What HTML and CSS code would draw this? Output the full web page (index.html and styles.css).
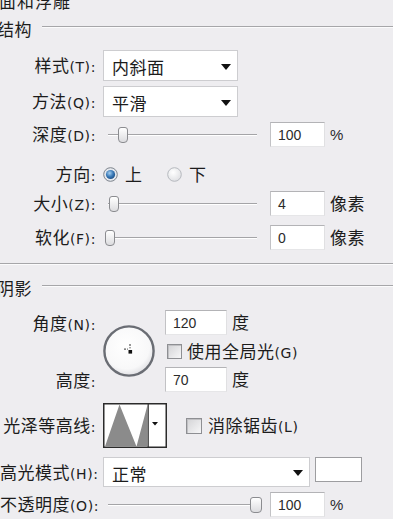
FILE: index.html
```html
<!DOCTYPE html>
<html lang="zh">
<head>
<meta charset="utf-8">
<title>斜面和浮雕</title>
<link rel="stylesheet" href="styles.css">
</head>
<body>
<div class="panel">
  <div class="title">面和浮雕</div>

  <div class="ghead g1"><span class="gtxt">结构</span><i class="rule"></i></div>

  <div class="row sel-row first">
    <div class="lbl">样式<span class="k">(T):</span></div>
    <div class="select w135"><span class="stxt">内斜面</span><b class="caret"></b></div>
  </div>

  <div class="row sel-row">
    <div class="lbl">方法<span class="k">(Q):</span></div>
    <div class="select w135"><span class="stxt">平滑</span><b class="caret"></b></div>
  </div>

  <div class="row val-row depth">
    <div class="lbl">深度<span class="k">(D):</span></div>
    <div class="slider"><i class="track"></i><b class="thumb" style="left:15px"></b></div>
    <div class="num">100</div>
    <span class="unit pct">%</span>
  </div>

  <div class="row dir-row">
    <div class="lbl">方向<span class="k">:</span></div>
    <svg class="radio" viewBox="0 0 15 15">
      <defs>
        <radialGradient id="rb" cx="40%" cy="35%" r="70%">
          <stop offset="0" stop-color="#a7d0f0"/>
          <stop offset="0.55" stop-color="#3b7ab8"/>
          <stop offset="1" stop-color="#1b4c82"/>
        </radialGradient>
      </defs>
      <circle cx="7.5" cy="7.5" r="6.8" fill="#e6e9ee" stroke="#7d838c" stroke-width="1"/>
      <circle cx="7.5" cy="7.5" r="4.6" fill="url(#rb)"/>
    </svg>
    <span class="rtxt">上</span>
    <svg class="radio r2" viewBox="0 0 15 15">
      <defs>
        <radialGradient id="rw" cx="40%" cy="35%" r="70%">
          <stop offset="0" stop-color="#ffffff"/>
          <stop offset="1" stop-color="#dedfe2"/>
        </radialGradient>
      </defs>
      <circle cx="7.5" cy="7.5" r="6.8" fill="url(#rw)" stroke="#b6b9bf" stroke-width="1"/>
    </svg>
    <span class="rtxt">下</span>
  </div>

  <div class="row val-row size">
    <div class="lbl">大小<span class="k">(Z):</span></div>
    <div class="slider"><i class="track"></i><b class="thumb" style="left:6px"></b></div>
    <div class="num">4</div>
    <span class="unit">像素</span>
  </div>

  <div class="row val-row soft">
    <div class="lbl">软化<span class="k">(F):</span></div>
    <div class="slider"><i class="track"></i><b class="thumb" style="left:2px"></b></div>
    <div class="num">0</div>
    <span class="unit">像素</span>
  </div>

  <div class="sep"></div>

  <div class="ghead g2"><span class="gtxt">阴影</span><i class="rule"></i></div>

  <div class="angle">
    <div class="lcol">
      <div class="lcell">角度<span class="k">(N):</span></div>
      <div class="lcell">高度<span class="k">:</span></div>
    </div>
    <svg class="dial" viewBox="0 0 52 52">
      <defs>
        <radialGradient id="dg" cx="45%" cy="40%" r="62%">
          <stop offset="0" stop-color="#ffffff"/>
          <stop offset="0.75" stop-color="#f8f8f9"/>
          <stop offset="1" stop-color="#dedee2"/>
        </radialGradient>
      </defs>
      <circle cx="26" cy="26" r="24.6" fill="url(#dg)" stroke="#6a6d74" stroke-width="2.4"/>
      <rect x="26.5" y="19" width="1" height="2" fill="#333"/>
      <rect x="26.5" y="22" width="1" height="1.4" fill="#555"/>
      <rect x="21" y="23.6" width="2" height="1" fill="#333"/>
      <rect x="24" y="23.6" width="1" height="1" fill="#555"/>
      <rect x="25.5" y="25" width="3.6" height="3.6" fill="#111"/>
    </svg>
    <div class="rcol">
      <div class="iline"><div class="num w62">120</div><span class="unit">度</span></div>
      <div class="chkline"><i class="chk"></i><span class="ctxt">使用全局光<span class="k">(G)</span></span></div>
      <div class="iline"><div class="num w62">70</div><span class="unit">度</span></div>
    </div>
  </div>

  <div class="row contour-row">
    <div class="lbl">光泽等高线<span class="k">:</span></div>
    <svg class="contour" viewBox="0 0 64 45">
      <rect x="0.75" y="0.75" width="62.5" height="43.5" fill="#ffffff" stroke="#2b2b2b" stroke-width="1.5"/>
      <polygon points="2,43.5 16.5,1.5 33.5,43.5 44.5,2 44.5,43.5" fill="#8b8b8b"/>
      <line x1="45.2" y1="1" x2="45.2" y2="44" stroke="#2b2b2b" stroke-width="1.2"/>
      <polygon points="49,19 55,19 52,22.5" fill="#111"/>
    </svg>
    <i class="chk big"></i><span class="ctxt">消除锯齿<span class="k">(L)</span></span>
  </div>

  <div class="row mode-row">
    <div class="lbl">高光模式<span class="k">(H):</span></div>
    <div class="select w207"><span class="stxt">正常</span><b class="caret"></b></div>
    <div class="swatch"></div>
  </div>

  <div class="row val-row opacity">
    <div class="lbl">不透明度<span class="k">(O):</span></div>
    <div class="slider"><i class="track"></i><b class="thumb wide" style="left:147px"></b></div>
    <div class="num">100</div>
    <span class="unit pct">%</span>
  </div>
</div>
</body>
</html>
```

FILE: styles.css
```css
html, body {
  margin: 0;
  padding: 0;
}

body {
  background: #eeedf0;
  font-family: "Noto Sans CJK SC", "Noto Sans", sans-serif;
  font-size: 17px;
  color: #1c1c1c;
  width: 393px;
  height: 519px;
  overflow: hidden;
}

.panel {
  display: flex;
  flex-direction: column;
}

.title {
  margin-top: -6px;
  margin-left: -1px;
  height: 14px;
  line-height: 14px;
  white-space: nowrap;
  letter-spacing: 1px;
}

.k {
  font-family: "DejaVu Sans", sans-serif;
  font-size: 14px;
  letter-spacing: 0.6px;
}

/* group headers */
.ghead {
  display: flex;
  height: 24px;
  align-items: center;
}

.g1 { margin-top: 9px; }
.g2 { margin-top: 11px; }

.gtxt {
  margin-left: -3px;
  line-height: 24px;
  letter-spacing: 0.5px;
  white-space: nowrap;
}

.rule {
  flex: 1;
  align-self: flex-start;
  margin-top: 9px;
  margin-left: 10px;
  height: 1px;
  background: #a6a6a9;
  border-bottom: 1px solid #fbfbfc;
}

.sep {
  margin-top: 13px;
  height: 1px;
  background: #a6a6a9;
  border-bottom: 1px solid #fbfbfc;
}

/* rows */
.row {
  display: flex;
  align-items: center;
}

.lbl {
  width: 96px;
  flex: none;
  margin-right: 7px;
  text-align: right;
  white-space: nowrap;
  line-height: 1.2;
  letter-spacing: 0.5px;
}

.sel-row { height: 31px; margin-top: 5px; }
.sel-row.first { margin-top: 9px; }

.select {
  display: flex;
  align-items: center;
  box-sizing: border-box;
  height: 100%;
  background: #ffffff;
  border: 1px solid #cdcdd0;
  padding-left: 8px;
  padding-right: 6px;
  flex: none;
}

.w135 { width: 135px; }
.w207 { width: 207px; }

.stxt {
  flex: 1;
  padding-top: 4px;
  line-height: 1.2;
  letter-spacing: 0.5px;
}

.caret {
  width: 0;
  height: 0;
  border-left: 5px solid transparent;
  border-right: 5px solid transparent;
  border-top: 6px solid #111;
  margin-top: 2px;
}

/* value rows */
.val-row { height: 25px; }
.depth { margin-top: 5px; }
.size { margin-top: 7px; }
.soft { margin-top: 9px; }
.opacity { margin-top: 5px; }

.slider {
  position: relative;
  flex: none;
  width: 159px;
  height: 18px;
  margin-right: 8px;
  padding: 0 5px;
  box-sizing: border-box;
  display: flex;
  align-items: center;
}

.track {
  flex: 1;
  height: 1px;
  background: #a4a4a7;
  border-bottom: 1px solid #ffffff;
}

.thumb {
  position: absolute;
  top: 1px;
  width: 10px;
  height: 16px;
  box-sizing: border-box;
  border: 1px solid #8b8c90;
  border-radius: 3px 3px 4px 4px;
  background: linear-gradient(#ffffff, #dcdcdf);
}

.thumb.wide { width: 12px; }

.num {
  flex: none;
  width: 55px;
  height: 25px;
  box-sizing: border-box;
  background: #ffffff;
  border: 1px solid;
  border-color: #b3b3b6 #e0e0e2 #e6e6e8 #c2c2c5;
  padding-left: 7px;
  display: flex;
  align-items: center;
  font-family: "Liberation Sans", sans-serif;
  font-size: 14px;
  color: #2b2b2b;
}

.num.w62 { width: 62px; }

.unit {
  margin-left: 5px;
  line-height: 1.2;
  letter-spacing: 0.5px;
  white-space: nowrap;
}

.unit.pct {
  font-family: "Liberation Sans", sans-serif;
  font-size: 15px;
  color: #2b2b2b;
}

/* direction */
.dir-row {
  height: 20px;
  margin-top: 17px;
}

.radio {
  width: 15px;
  height: 15px;
  flex: none;
}

.radio.r2 { margin-left: 25px; }

.rtxt {
  margin-left: 7px;
  line-height: 1.2;
}

/* angle block */
.angle {
  display: flex;
  height: 82px;
  margin-top: 10px;
}

.lcol {
  width: 96px;
  flex: none;
  margin-right: 7px;
  display: flex;
  flex-direction: column;
  justify-content: space-between;
  text-align: right;
  letter-spacing: 0.5px;
}

.lcell {
  height: 25px;
  line-height: 25px;
  white-space: nowrap;
}

.dial {
  width: 52px;
  height: 52px;
  flex: none;
  align-self: center;
  margin-right: 10px;
}

.rcol {
  display: flex;
  flex-direction: column;
}

.iline {
  display: flex;
  align-items: center;
  height: 25px;
}

.chkline {
  display: flex;
  align-items: center;
  height: 17px;
  margin-top: 8px;
  margin-bottom: 7px;
}

.chk {
  flex: none;
  width: 15px;
  height: 15px;
  box-sizing: border-box;
  margin-left: 2px;
  margin-right: 5px;
  border: 1px solid #8e8f93;
  background: linear-gradient(135deg, #d3d3d6, #f7f7f8);
  box-shadow: inset 1px 1px 0 #c0c0c3;
}

.chk.big {
  width: 16px;
  height: 16px;
  margin-left: 19px;
  margin-right: 6px;
}

.ctxt {
  line-height: 1.2;
  letter-spacing: 0.5px;
  white-space: nowrap;
}

/* contour */
.contour-row {
  height: 45px;
  margin-top: 11px;
}

.contour {
  width: 64px;
  height: 45px;
  flex: none;
}

/* mode */
.mode-row {
  height: 30px;
  margin-top: 9px;
}

.swatch {
  flex: none;
  align-self: flex-start;
  margin-left: 5px;
  width: 47px;
  height: 25px;
  box-sizing: border-box;
  background: #ffffff;
  border: 1.5px solid #9d9da0;
}
```
